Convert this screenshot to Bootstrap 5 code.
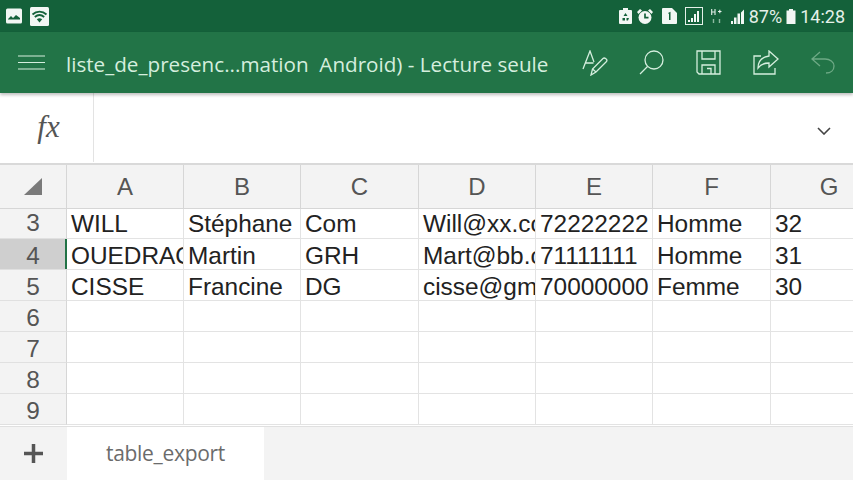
<!DOCTYPE html>
<html lang="fr">
<head>
<meta charset="utf-8">
<title>Excel</title>
<link href="https://cdn.jsdelivr.net/npm/bootstrap@5.3.0/dist/css/bootstrap.min.css" rel="stylesheet">
<style>
html,body{width:853px;height:480px;overflow:hidden;background:#fff}
.stat-bar{height:32px;background:#14613a;color:#e4f0e9;font-family:Roboto,sans-serif;font-size:18px;padding:0 8px 0 6px}
.title-bar{height:61px;background:#227447;color:#d5eede;padding-left:18px;font-family:"Open Sans",sans-serif;box-shadow:0 2px 3px rgba(0,0,0,.25);position:relative;z-index:2}
.doc-title{font-size:20.65px;margin-left:21px;padding-top:3px;white-space:pre;width:508px;flex:none}
.tool-slot{width:57px;flex:none}
.tool-first{margin-left:-8px}
.fx-bar{height:72px;border-bottom:2px solid #d9d9d9}
.fx-cell{width:94px;height:69px;border-right:1px solid #e3e3e3;font-family:"Liberation Serif",serif;font-style:italic;font-size:31px;color:#555;padding-left:4px}
.chev-slot{padding-right:22px;padding-top:6px}
.sheet-grid{display:grid;grid-template-columns:67px 117px 117px 118px 117px 117px 118px 117px;grid-template-rows:44px 30px 31px 31px 31px 31px 31px 31px;font-family:"Liberation Sans",sans-serif;height:261px;overflow:hidden}
.head-cell{background:#f3f3f3;color:#555;font-size:24px;border-right:1px solid #d6d6d6;border-bottom:1px solid #d6d6d6}
.row-num{background:#f3f3f3;color:#555;font-size:24.400px;border-right:1px solid #d6d6d6;border-bottom:1px solid #e0e0e0}
.row-low{padding-top:5px}
.row-sel{background:#cfcfcf;position:relative}
.row-sel::after{content:"";position:absolute;right:-1px;top:0;bottom:0;width:2px;background:#217346}
.data-cell{color:#222;font-size:24.400px;line-height:30px;padding-left:4px;border-right:1px solid #e3e3e3;border-bottom:1px solid #e3e3e3;overflow:hidden;white-space:nowrap}
.data-low{line-height:33px}
.tab-strip{height:54px;background:#f3f3f3;border-top:1px solid #e0e0e0;font-family:"Open Sans",sans-serif}
.add-slot{width:67px;flex:none;color:#555}
.tab-active{width:197px;flex:none;background:#fff;color:#6b6b6b;font-size:21px;letter-spacing:-.3px}
</style>
</head>
<body>
<div class="stat-bar d-flex align-items-center justify-content-between">
  <div class="d-flex align-items-center gap-2">
    <svg width="16" height="16" viewBox="0 0 16 16"><rect width="16" height="15" y="0.500" rx="1.500" fill="#f2f7f4"/><path d="M2 11l3-3 2 2 3-3 4 3v1.500H2z" fill="#14613a"/></svg>
    <svg width="19" height="19" viewBox="0 0 19 19"><rect width="19" height="19" rx="1.500" fill="#f2f7f4"/><path d="M2.500 7.500c4-3.800 10-3.800 14 0M4.800 10c2.800-2.400 6.600-2.400 9.400 0" fill="none" stroke="#14613a" stroke-width="1.800"/><path d="M6.800 12.200c1.600-1.200 3.800-1.200 5.400 0L9.500 15.500z" fill="#14613a"/></svg>
  </div>
  <div class="d-flex align-items-center">
    <svg width="13" height="16" viewBox="0 0 13 16"><path d="M4 0h5v2h3a1 1 0 0 1 1 1v12a1 1 0 0 1-1 1H1a1 1 0 0 1-1-1V3a1 1 0 0 1 1-1h3z" fill="#f2f7f4"/><path d="M6.500 5l2 3H4.500zM3.500 10h2.500v2.500H3.500zM7.500 10h2.500l-1 2.500H7.500z" fill="#14613a"/></svg>
    <svg class="ms-1" width="18" height="17" viewBox="0 0 18 17"><path d="M1 4l3-3 2 1.500L2.500 6zM17 4l-3-3-2 1.500L15.500 6z" fill="#f2f7f4"/><circle cx="9" cy="9.500" r="6.500" fill="#f2f7f4"/><path d="M9 5.500v4.200h3.500" fill="none" stroke="#14613a" stroke-width="1.700"/></svg>
    <svg class="ms-2" width="15" height="16" viewBox="0 0 15 16"><path d="M1 0h9l5 5v10a1 1 0 0 1-1 1H1a1 1 0 0 1-1-1V1a1 1 0 0 1 1-1z" fill="#f2f7f4"/><path d="M6 5l2.500-1.200V12H7V6z" fill="#14613a"/></svg>
    <svg class="ms-2" width="18" height="18" viewBox="0 0 18 18"><rect x=".5" y=".5" width="17" height="17" fill="none" stroke="#e4f0e9"/><path d="M3 15h2v-2H3zM6 15h2v-4H6zM9 15h2V7H9zM12 15h2V4h-2z" fill="#f2f7f4"/></svg>
    <svg class="ms-2" width="11" height="17" viewBox="0 0 11 17"><path d="M.700 1v6M4 1v6M.700 4H4M7 3.500h3.500M8.800 1.700v3.600" fill="none" stroke="#e4f0e9" stroke-width="1.100"/><path d="M2.500 11v4M8.500 11v4" stroke="#8db9a1" stroke-width="1.400"/></svg>
    <svg class="ms-2" width="15" height="17" viewBox="0 0 15 17"><path d="M1 16h2v-3H1zM4 16h2.500V9.500H4zM7.500 16H10V5.500H7.500zM11 16h3V1.500l-3 3z" fill="#f2f7f4"/></svg>
    <span class="ms-1">87%</span>
    <svg class="ms-1" width="10" height="15" viewBox="0 0 10 15"><path d="M3 0h4v1.500h2.500V15H.500V1.500H3z" fill="#f2f7f4"/></svg>
    <span class="ms-1">14:28</span>
  </div>
</div>

<div class="title-bar d-flex align-items-center">
  <svg class="flex-shrink-0" width="27" height="15" viewBox="0 0 27 15"><path d="M0 1h27M0 7.500h27M0 14h27" stroke="#d5eede" stroke-width="1.200"/></svg>
  <div class="doc-title">liste_de_presenc...mation  Android) - Lecture seule</div>
  <div class="d-flex align-items-center">
    <div class="tool-slot tool-first d-flex justify-content-center"><svg width="26" height="26" viewBox="0 0 26 26" fill="none" stroke="#d5eede" stroke-width="1.300"><path d="M1 19L8 1l4 11M3.500 13h8"/><path d="M9 25l1.500-6L21 8.500c1.500-1.500 5 1 3.500 3L14 22z"/><path d="M10.500 19l3.500 3"/></svg></div>
    <div class="tool-slot d-flex justify-content-center"><svg width="25" height="25" viewBox="0 0 25 25" fill="none" stroke="#d5eede" stroke-width="1.300"><circle cx="15" cy="10" r="9"/><path d="M8.500 16.500L1 24"/></svg></div>
    <div class="tool-slot d-flex justify-content-center"><svg width="25" height="25" viewBox="0 0 25 25" fill="none" stroke="#d5eede" stroke-width="1.300"><path d="M1 1h23v23H3l-2-2z"/><path d="M6 1v8h13V1M6 24v-9h13v9M11 18.500h4V24"/></svg></div>
    <div class="tool-slot d-flex justify-content-center"><svg width="26" height="25" viewBox="0 0 26 25" fill="none" stroke="#d5eede" stroke-width="1.300"><path d="M8 6H1v18h21v-6"/><path d="M16 1l9 8-9 8v-4c-5 0-8 1-11 5 0-7 4-11 11-12z"/></svg></div>
    <div class="tool-slot d-flex justify-content-center"><svg width="24" height="23" viewBox="0 0 24 23" fill="none" stroke="#6da985" stroke-width="1.300"><path d="M9 1L1 8l8 7M1 8h13c5 0 9 3 9 7s-3 7-8 7"/></svg></div>
  </div>
</div>

<div class="fx-bar d-flex justify-content-between">
  <div class="fx-cell d-flex align-items-center justify-content-center">fx</div>
  <div class="chev-slot d-flex align-items-center"><svg width="14" height="8" viewBox="0 0 14 8" fill="none" stroke="#444" stroke-width="1.600"><path d="M1 1l6 6 6-6"/></svg></div>
</div>

<div class="sheet-grid">
  <div class="head-cell d-flex align-items-center justify-content-center"><svg width="18" height="17" viewBox="0 0 18 17"><path d="M18 0v17H0z" fill="#7a7a7a"/></svg></div>
  <div class="head-cell d-flex align-items-center justify-content-center">A</div>
  <div class="head-cell d-flex align-items-center justify-content-center">B</div>
  <div class="head-cell d-flex align-items-center justify-content-center">C</div>
  <div class="head-cell d-flex align-items-center justify-content-center">D</div>
  <div class="head-cell d-flex align-items-center justify-content-center">E</div>
  <div class="head-cell d-flex align-items-center justify-content-center">F</div>
  <div class="head-cell d-flex align-items-center justify-content-center">G</div>

  <div class="row-num d-flex align-items-center justify-content-center">3</div>
  <div class="data-cell">WILL</div><div class="data-cell">Stéphane</div><div class="data-cell">Com</div><div class="data-cell">Will@xx.com</div><div class="data-cell">72222222</div><div class="data-cell">Homme</div><div class="data-cell">32</div>

  <div class="row-num row-low row-sel d-flex align-items-center justify-content-center">4</div>
  <div class="data-cell data-low">OUEDRAOGO</div><div class="data-cell data-low">Martin</div><div class="data-cell data-low">GRH</div><div class="data-cell data-low">Mart@bb.com</div><div class="data-cell data-low">71111111</div><div class="data-cell data-low">Homme</div><div class="data-cell data-low">31</div>

  <div class="row-num row-low d-flex align-items-center justify-content-center">5</div>
  <div class="data-cell data-low">CISSE</div><div class="data-cell data-low">Francine</div><div class="data-cell data-low">DG</div><div class="data-cell data-low">cisse@gmail.com</div><div class="data-cell data-low">70000000</div><div class="data-cell data-low">Femme</div><div class="data-cell data-low">30</div>

  <div class="row-num row-low d-flex align-items-center justify-content-center">6</div>
  <div class="data-cell"></div><div class="data-cell"></div><div class="data-cell"></div><div class="data-cell"></div><div class="data-cell"></div><div class="data-cell"></div><div class="data-cell"></div>
  <div class="row-num row-low d-flex align-items-center justify-content-center">7</div>
  <div class="data-cell"></div><div class="data-cell"></div><div class="data-cell"></div><div class="data-cell"></div><div class="data-cell"></div><div class="data-cell"></div><div class="data-cell"></div>
  <div class="row-num row-low d-flex align-items-center justify-content-center">8</div>
  <div class="data-cell"></div><div class="data-cell"></div><div class="data-cell"></div><div class="data-cell"></div><div class="data-cell"></div><div class="data-cell"></div><div class="data-cell"></div>
  <div class="row-num row-low d-flex align-items-center justify-content-center">9</div>
  <div class="data-cell"></div><div class="data-cell"></div><div class="data-cell"></div><div class="data-cell"></div><div class="data-cell"></div><div class="data-cell"></div><div class="data-cell"></div>
</div>

<div class="tab-strip d-flex">
  <div class="add-slot d-flex align-items-center justify-content-center"><svg width="19" height="19" viewBox="0 0 19 19"><path d="M9.500 0v19M0 9.500h19" stroke="#555" stroke-width="3.500"/></svg></div>
  <div class="tab-active d-flex align-items-center justify-content-center">table_export</div>
</div>
<script src="https://cdn.jsdelivr.net/npm/bootstrap@5.3.0/dist/js/bootstrap.bundle.min.js"></script>
</body>
</html>
